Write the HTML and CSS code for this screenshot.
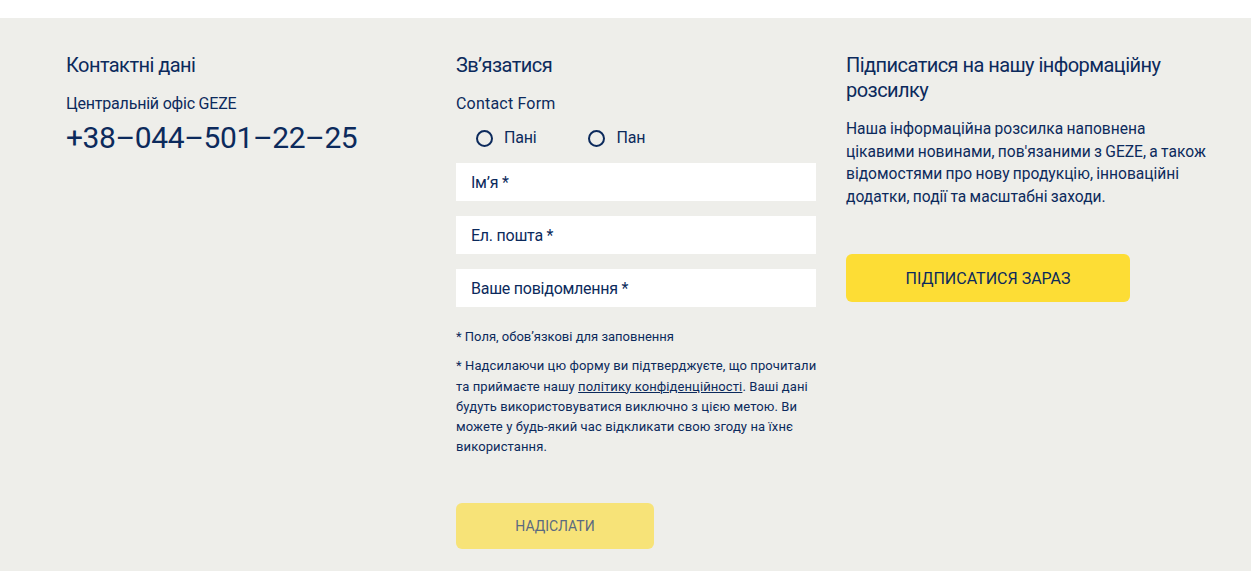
FILE: index.html
```html
<!DOCTYPE html>
<html lang="uk">
<head>
<meta charset="utf-8">
<title>Контакти</title>
<link rel="stylesheet" href="styles.css">
</head>
<body>
<div class="topbar"></div>
<footer class="contact">
  <div class="grid">
    <section class="col">
      <h2 class="title">Контактні дані</h2>
      <p class="office">Центральній офіс GEZE</p>
      <p class="phone">+38–044–501–22–25</p>
    </section>
    <section class="col">
      <h2 class="title">Зв’язатися</h2>
      <p class="office latin">Contact Form</p>
      <div class="radios">
        <label class="radio"><span class="circle"></span>Пані</label>
        <label class="radio"><span class="circle"></span>Пан</label>
      </div>
      <div class="fields">
        <div class="field">Ім’я *</div>
        <div class="field">Ел. пошта *</div>
        <div class="field">Ваше повідомлення *</div>
      </div>
      <p class="note">* Поля, обов’язкові для заповнення</p>
      <p class="note legal">* Надсилаючи цю форму ви підтверджуєте, що прочитали та приймаєте нашу <a href="#">політику конфіденційності</a>. Ваші дані будуть використовуватися виключно з цією метою. Ви можете у будь-який час відкликати свою згоду на їхнє використання.</p>
      <button class="btn btn-send">НАДІСЛАТИ</button>
    </section>
    <section class="col">
      <h2 class="title">Підписатися на нашу інформаційну розсилку</h2>
      <p class="text">Наша інформаційна розсилка наповнена цікавими новинами, пов'язаними з GEZE, а також відомостями про нову продукцію, інноваційні додатки, події та масштабні заходи.</p>
      <button class="btn btn-sub">ПІДПИСАТИСЯ ЗАРАЗ</button>
    </section>
  </div>
</footer>
</body>
</html>
```

FILE: styles.css
```css
* { box-sizing: border-box; }
html, body { margin: 0; padding: 0; }
body {
  font-family: Roboto, "Liberation Sans", sans-serif;
  color: #0c2a5c;
  background: #ffffff;
}
.topbar { height: 18px; background: #ffffff; }
.contact {
  background: #eeeeea;
  padding: 35px 0 24px 66px;
  min-height: 553px;
}
.grid {
  display: grid;
  grid-template-columns: 360px 360px 360px;
  column-gap: 30px;
}
.col { display: flex; flex-direction: column; align-items: flex-start; }
.title {
  margin: 0;
  font-size: 20px;
  line-height: 25px;
  font-weight: 400;
  letter-spacing: -0.55px;
}
.office {
  margin: 16px 0 0;
  font-size: 16px;
  line-height: 20px;
  letter-spacing: -0.2px;
}
.office.latin { letter-spacing: 0.2px; }
.phone {
  margin: 6px 0 0;
  font-size: 30px;
  line-height: 36px;
  letter-spacing: -0.4px;
}
.radios {
  display: flex;
  gap: 52px;
  margin: 14px 0 0 20px;
  height: 20px;
}
.radio {
  display: flex;
  align-items: center;
  gap: 11px;
  font-size: 16px;
  line-height: 20px;
  letter-spacing: -0.2px;
}
.circle {
  width: 17px;
  height: 17px;
  border: 2px solid #0c2a5c;
  border-radius: 50%;
}
.fields {
  display: flex;
  flex-direction: column;
  gap: 15px;
  margin-top: 15px;
  width: 360px;
}
.field {
  background: #ffffff;
  height: 38px;
  padding: 0 15px;
  display: flex;
  align-items: center;
  font-size: 16px;
  letter-spacing: -0.25px;
}
.note {
  margin: 20px 0 0;
  font-size: 13px;
  line-height: 20.3px;
}
.note.legal {
  margin-top: 9px;
  width: 364px;
  letter-spacing: 0.1px;
}
.note a { color: inherit; text-decoration: underline; }
.text {
  margin: 15px 0 0;
  font-size: 15.6px;
  line-height: 22.6px;
  width: 360px;
  word-spacing: -0.6px;
}
.btn {
  border: 0;
  border-radius: 6px;
  font-family: inherit;
  cursor: pointer;
}
.btn-send {
  margin-top: 45px;
  width: 198px;
  height: 46px;
  background: #f7e378;
  color: #5b6a80;
  font-size: 14px;
}
.btn-sub {
  margin-top: 46px;
  width: 284px;
  height: 48px;
  background: #fddd35;
  color: #0c2a5c;
  font-size: 16px;
}
```
